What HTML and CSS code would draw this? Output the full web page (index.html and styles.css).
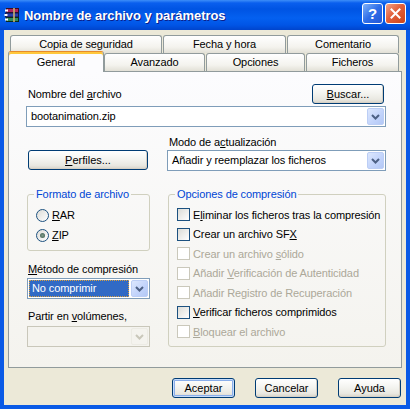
FILE: index.html
```html
<!doctype html>
<html lang="es">
<head>
    <meta charset="UTF-8">
    <title>Nombre de archivo y parámetros</title>
    <link rel="stylesheet" href="styles.css">
</head>
<body>
<div class="window">
    <div class="titlebar">
        <svg class="app-icon" width="16" height="16" viewBox="0 0 16 16">
            <rect x="2.5" y="1.5" width="12" height="4" fill="#b0245a" stroke="#3a0c1e"/>
            <rect x="1" y="2.5" width="3" height="2" fill="#fff"/>
            <rect x="1.5" y="6" width="13" height="4" fill="#2b3fa8" stroke="#10164a"/>
            <rect x="0.5" y="7" width="3" height="2" fill="#fff"/>
            <rect x="2.5" y="10.5" width="12" height="4" fill="#2f8a5c" stroke="#0c2a1a"/>
            <rect x="1" y="11.5" width="3" height="2" fill="#fff"/>
            <rect x="9" y="1" width="2" height="14" fill="#c8b070" opacity=".8"/>
        </svg>
        <span class="title">Nombre de archivo y parámetros</span>
        <span class="cap-btn help">?</span>
        <span class="cap-btn close">
            <svg width="11" height="11" viewBox="0 0 11 11"><path d="M1.5 1.5 L9.5 9.5 M9.5 1.5 L1.5 9.5" stroke="#fff" stroke-width="2" stroke-linecap="square"/></svg>
        </span>
    </div>

    <div class="client">
        <div class="tabrow back">
            <div class="tab tab-copia">Copia de seguridad</div>
            <div class="tab tab-fecha">Fecha y hora</div>
            <div class="tab tab-coment">Comentario</div>
        </div>
        <div class="tabrow front">
            <div class="tab active tab-general">General</div>
            <div class="tab tab-avanz">Avanzado</div>
            <div class="tab tab-opc">Opciones</div>
            <div class="tab tab-fich">Ficheros</div>
        </div>

        <div class="panel">
            <div class="file-row">
                <span class="lbl">Nombre del <u>a</u>rchivo</span>
                <button class="btn btn-buscar"><u>B</u>uscar...</button>
            </div>
            <div class="combo">
                <span class="combo-text">bootanimation.zip</span>
                <span class="combo-btn"><svg width="9" height="6" viewBox="0 0 9 6"><path d="M1 1 L4.5 4.5 L8 1" fill="none" stroke="#4d6185" stroke-width="2"/></svg></span>
            </div>

            <div class="cols">
                <button class="btn btn-perfiles"><u>P</u>erfiles...</button>
                <div>
                    <div class="lbl">Modo de a<u>c</u>tualización</div>
                    <div class="combo">
                        <span class="combo-text">Añadir y reemplazar los ficheros</span>
                        <span class="combo-btn"><svg width="9" height="6" viewBox="0 0 9 6"><path d="M1 1 L4.5 4.5 L8 1" fill="none" stroke="#4d6185" stroke-width="2"/></svg></span>
                    </div>
                </div>

                <div>
                    <fieldset class="group group-left">
                        <legend>Formato de archivo</legend>
                        <div class="opt radio-row"><span class="radio"></span><span><u>R</u>AR</span></div>
                        <div class="opt radio-row"><span class="radio checked"></span><span><u>Z</u>IP</span></div>
                    </fieldset>
                    <div class="lbl lbl-metodo"><u>M</u>étodo de compresión</div>
                    <div class="combo combo-small focused">
                        <span class="combo-text"><span class="sel">No comprimir</span></span>
                        <span class="combo-btn"><svg width="9" height="6" viewBox="0 0 9 6"><path d="M1 1 L4.5 4.5 L8 1" fill="none" stroke="#4d6185" stroke-width="2"/></svg></span>
                    </div>
                    <div class="lbl lbl-partir">Partir en <u>v</u>olúmenes,</div>
                    <div class="combo combo-small disabled">
                        <span class="combo-text"></span>
                        <span class="combo-btn"><svg width="9" height="6" viewBox="0 0 9 6"><path d="M1 1 L4.5 4.5 L8 1" fill="none" stroke="#c9c7ba" stroke-width="2"/></svg></span>
                    </div>
                </div>

                <fieldset class="group group-right">
                    <legend>Opciones de compresión</legend>
                    <div class="opt check-row"><span class="check"></span><span>E<u>l</u>iminar los ficheros tras la compresión</span></div>
                    <div class="opt check-row"><span class="check"></span><span>Crear un archivo SF<u>X</u></span></div>
                    <div class="opt check-row off"><span class="check"></span><span>Crear un archivo <u>s</u>ólido</span></div>
                    <div class="opt check-row off"><span class="check"></span><span>Añadir <u>V</u>erificación de Autenticidad</span></div>
                    <div class="opt check-row off"><span class="check"></span><span>Añadir Registro de Recuperación</span></div>
                    <div class="opt check-row"><span class="check"></span><span><u>V</u>erificar ficheros comprimidos</span></div>
                    <div class="opt check-row off"><span class="check"></span><span><u>B</u>loquear el archivo</span></div>
                </fieldset>
            </div>
        </div>

        <div class="dlg-buttons">
            <button class="btn default">Aceptar</button>
            <button class="btn">Cancelar</button>
            <button class="btn">Ayuda</button>
        </div>
    </div>
</div>
</body>
</html>
```

FILE: styles.css
```css
*{
    margin: 0;
    padding: 0;
}
body{
    background: #0054e3;
    font: 11px "Liberation Sans", Arial, sans-serif;
    color: #000;
}
u{
    text-decoration: underline;
    text-underline-offset: 1px;
}
.window{
    width: 410px;
    height: 409px;
    display: flex;
    flex-direction: column;
    background: #0a5ae6;
}

/* title bar */
.titlebar{
    height: 30px;
    display: flex;
    align-items: center;
    padding: 0 4px;
    background: linear-gradient(#3d8ef8 0, #0a5fee 3px, #0054e3 9px, #0460f0 18px, #0055e6 25px, #0044cc 30px);
}
.app-icon{
    flex: none;
}
.title{
    flex: 1;
    margin-left: 4px;
    color: #fff;
    font: bold 13px "Liberation Sans", Arial, sans-serif;
    letter-spacing: -0.05px;
    text-shadow: 1px 1px #0c1f8a;
}
.cap-btn{
    width: 21px;
    height: 21px;
    box-sizing: border-box;
    border: 1px solid #fff;
    border-radius: 3px;
    display: flex;
    align-items: center;
    justify-content: center;
    align-self: flex-start;
    margin-top: 3px;
}
.help{
    background: linear-gradient(135deg, #7fb2fa, #2f6ee8 50%, #2457d6);
    color: #fff;
    font: bold 15px "Liberation Sans", Arial, sans-serif;
    margin-right: 2px;
}
.close{
    background: linear-gradient(135deg, #f3a48a, #e2603c 45%, #cc4418);
}

/* client area */
.client{
    flex: 1;
    background: #ece9d8;
    margin: 0 4px 4px;
    padding: 5px 4px 0;
    letter-spacing: -0.1px;
}

/* tabs */
.tabrow{
    display: flex;
    height: 18px;
    align-items: flex-start;
}
.tabrow.back{
    padding-left: 2px;
    gap: 1px;
}
.tab{
    box-sizing: border-box;
    height: 18px;
    border: 1px solid #919b9c;
    border-bottom: 0;
    border-radius: 3px 3px 0 0;
    background: linear-gradient(#ffffff, #f4f3ee 65%, #e2e0d6);
    text-align: center;
    line-height: 17px;
    white-space: nowrap;
}
.tab-copia{ width: 152px; }
.tab-fecha{ width: 123px; }
.tab-coment{ width: 112px; }
.tab-general{ width: 96px; }
.tab-avanz{ width: 101px; margin-right: 1px; }
.tab-opc{ width: 99px; margin-right: 1px; }
.tab-fich{ width: 93px; }
.tab.active{
    position: relative;
    z-index: 1;
    height: 21px;
    margin-top: -2px;
    border-top-color: #e68b2c;
    background: #fcfcfe;
    box-shadow: inset 0 2px #ffc83c;
    line-height: 20px;
}

.panel{
    height: 297px;
    box-sizing: border-box;
    border: 1px solid #919b9c;
    background: linear-gradient(#fcfcfe, #f4f3ee);
    padding: 12px 15px 0 17px;
}

/* form controls */
.lbl{
    line-height: 13px;
    padding-left: 2px;
    white-space: nowrap;
}
.file-row{
    display: flex;
    justify-content: space-between;
    align-items: flex-end;
    height: 20px;
    margin-bottom: 2px;
}
.file-row .lbl{
    margin-bottom: 3px;
}
.btn{
    font: inherit;
    color: #000;
    box-sizing: border-box;
    height: 20px;
    border: 1px solid #003c74;
    border-radius: 3px;
    background: linear-gradient(#ffffff, #f4f4f0 45%, #e9e8e1 80%, #d8d3c8);
    box-shadow: inset -1px -1px #d6d0c5;
}
.btn-buscar{
    width: 72px;
    margin-right: 2px;
}
.btn-perfiles{
    width: 120px;
    margin: 0 0 1px 2px;
    align-self: end;
}
.btn.default{
    box-shadow: inset 0 0 0 1px #c6dcfb, inset 0 0 0 2px #8aaeea;
}

.combo{
    display: flex;
    height: 21px;
    box-sizing: border-box;
    border: 1px solid #7f9db9;
    background: #fff;
    padding: 1px;
}
.combo-text{
    flex: 1;
    line-height: 17px;
    padding-left: 3px;
    white-space: nowrap;
    overflow: hidden;
}
.combo-btn{
    flex: none;
    width: 17px;
    height: 17px;
    box-sizing: border-box;
    border: 1px solid #bccef5;
    border-radius: 2px;
    background: linear-gradient(135deg, #dce7fd, #c1d3fb 60%, #b3c8f6);
    display: flex;
    align-items: center;
    justify-content: center;
}

.cols{
    display: grid;
    grid-template-columns: 124px 1fr;
    column-gap: 17px;
    row-gap: 17px;
    margin-top: 9px;
    align-items: start;
}
.cols .lbl + .combo{
    margin-top: 1px;
}

/* group boxes */
.group{
    border: 1px solid #d0d0bf;
    border-radius: 3px;
    padding: 4px 6px 5px;
    min-width: 0;
    margin-left: 1px;
}
.group legend{
    padding: 0 2px;
    line-height: 13px;
    color: #0046d5;
}
.group-right{
    padding-bottom: 4px;
}
.opt{
    display: flex;
    align-items: center;
    gap: 3px;
    padding-left: 2px;
    white-space: nowrap;
}
.radio-row{
    height: 20px;
}
.check-row{
    height: 19.5px;
}
.radio{
    flex: none;
    width: 13px;
    height: 13px;
    box-sizing: border-box;
    border: 1px solid #1c5180;
    border-radius: 50%;
    background: linear-gradient(135deg, #dcdcd7, #ffffff);
    display: flex;
    align-items: center;
    justify-content: center;
}
.radio.checked::after{
    content: "";
    width: 5px;
    height: 5px;
    border-radius: 50%;
    background: radial-gradient(#7f9a8a, #3b5a4c);
}
.check{
    flex: none;
    width: 13px;
    height: 13px;
    box-sizing: border-box;
    border: 1px solid #1c5180;
    background: linear-gradient(135deg, #dcdcd7, #ffffff);
}
.off{
    color: #aca899;
}
.off .check{
    border-color: #cac8bb;
    background: #fff;
}

.lbl-metodo{
    margin-top: 12px;
}
.combo-small{
    width: 123px;
    margin-left: 1px;
}
.cols .lbl-metodo + .combo{
    margin-top: 2px;
}
.lbl-partir{
    margin-top: 11px;
}
.cols .lbl-partir + .combo{
    margin-top: 3px;
}
.focused .combo-text{
    padding-left: 0;
    margin-right: 2px;
}
.focused .sel{
    display: block;
    height: 17px;
    box-sizing: border-box;
    background: #316ac5;
    color: #fff;
    border: 1px dotted #d8a040;
    line-height: 15px;
    padding-left: 2px;
}
.disabled{
    border-color: #c9c7ba;
    background: #f4f3ee;
}
.disabled .combo-btn{
    border-color: #ecebe4;
    background: #f4f3ee;
}

/* dialog buttons */
.dlg-buttons{
    display: flex;
    justify-content: flex-end;
    gap: 20px;
    margin-top: 10px;
    padding-right: 1px;
}
.dlg-buttons .btn{
    width: 63px;
}
```
